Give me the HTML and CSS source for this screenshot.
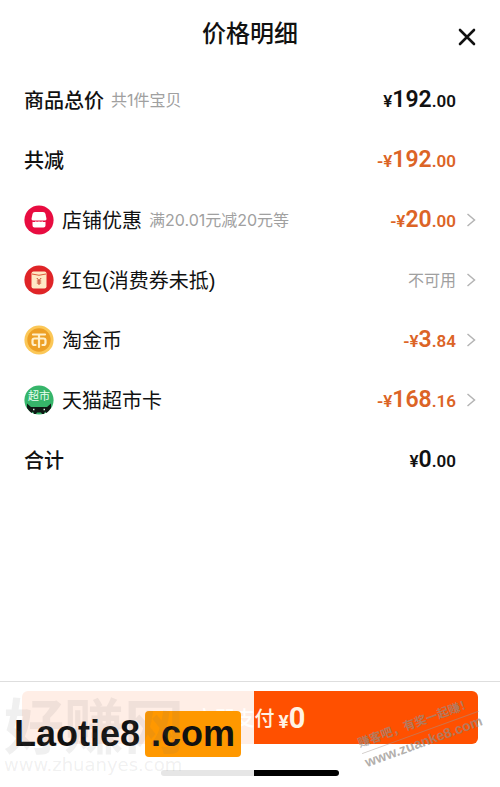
FILE: index.html
```html
<!DOCTYPE html>
<html lang="zh-CN">
<head>
<meta charset="utf-8">
<meta name="viewport" content="width=device-width, initial-scale=1">
<title>价格明细</title>
<link rel="stylesheet" href="styles.css">
</head>
<body>
<main class="sheet">
  <header class="header">
    <h1 class="title">价格明细</h1>
    <button class="close" type="button" aria-label="关闭">
      <svg width="18" height="18" viewBox="0 0 18 18"><path d="M2 2l14 14M16 2L2 16" fill="none" stroke="#111" stroke-width="2.6" stroke-linecap="round"/></svg>
    </button>
  </header>

  <ul class="rows">
    <li class="row">
      <span class="label strong">商品总价</span><span class="note">共1件宝贝</span>
      <span class="price"><small>¥</small>192<small>.00</small></span>
    </li>
    <li class="row">
      <span class="label strong">共减</span>
      <span class="price off"><small>-¥</small>192<small>.00</small></span>
    </li>
    <li>
      <button class="row" type="button">
        <svg class="icon" viewBox="0 0 30 30"><circle cx="15" cy="15" r="14.6" fill="#e80c40"/><path d="M11 7h8q2 0 2.500 2l1 5q0 1.500-2 1.500h-11q-2 0-2-1.500l1-5q.5-2 2.500-2z" fill="#fff"/><path d="M8.500 16.800q1.800.8 3.300-.6 1.500 1.300 3.200 0 1.700 1.300 3.200 0 1.500 1.400 3.300.6v3.700q0 2-2 2h-9q-2 0-2-2z" fill="#fff"/></svg>
        <span class="label">店铺优惠</span><span class="note">满20.01元减20元等</span>
        <span class="price off"><small>-¥</small>20<small>.00</small></span>
        <svg class="chevron" viewBox="0 0 10 16"><path d="M1.500 2l7 6-7 6"/></svg>
      </button>
    </li>
    <li>
      <button class="row" type="button">
        <svg class="icon" viewBox="0 0 30 30"><circle cx="15" cy="15" r="14.600" fill="#df2427"/><rect x="7.500" y="6.500" width="15" height="17" rx="2" fill="#ffe9c5"/><path d="M8 9q7 2.500 14 0" fill="none" stroke="#df5a3c"/><path d="M12.800 13l2.200 2.500 2.200-2.500M15 15.500v4.500M12.800 16h4.400M12.800 18h4.400" fill="none" stroke="#c8462d" stroke-width="1"/></svg>
        <span class="label">红包(消费券未抵)</span>
        <span class="note status">不可用</span>
        <svg class="chevron" viewBox="0 0 10 16"><path d="M1.500 2l7 6-7 6"/></svg>
      </button>
    </li>
    <li>
      <button class="row" type="button">
        <svg class="icon" viewBox="0 0 30 30"><circle cx="15" cy="15" r="14.600" fill="#fbc757"/><circle cx="15" cy="15" r="11.700" fill="#eda025"/><path d="M9 9.500h12M15 9.500v12.500M11.500 20h-1q-2 0-2-2v-2.500q0-2 2-2h9q2 0 2 2V18q0 2-2 2h-1" fill="none" stroke="#fff0cb" stroke-width="2.200" stroke-linecap="round" stroke-linejoin="round"/></svg>
        <span class="label">淘金币</span>
        <span class="price off"><small>-¥</small>3<small>.84</small></span>
        <svg class="chevron" viewBox="0 0 10 16"><path d="M1.500 2l7 6-7 6"/></svg>
      </button>
    </li>
    <li>
      <button class="row" type="button">
        <svg class="icon" viewBox="0 0 30 30"><circle cx="15" cy="15" r="14.600" fill="#36b56a"/><path d="M3 18.500l4 3.500h16l4-3.500v4.500q-2 3-4.500 5l-1.500-1.500-1 2.500h-2l-1-1.500h-4l-1 1.500h-2L9 26.500 7.500 28Q5 26 3 23z" fill="#101915"/><path d="M9 24.500h1.500M19.500 24.500H21" fill="none" stroke="#d7f0df" stroke-width="1.300"/><text class="badge" x="15" y="15" text-anchor="middle">超市</text></svg>
        <span class="label">天猫超市卡</span>
        <span class="price off"><small>-¥</small>168<small>.16</small></span>
        <svg class="chevron" viewBox="0 0 10 16"><path d="M1.500 2l7 6-7 6"/></svg>
      </button>
    </li>
    <li class="row">
      <span class="label strong">合计</span>
      <span class="price"><small>¥</small>0<small>.00</small></span>
    </li>
  </ul>

  <footer class="footer">
    <button class="pay" type="button">立即支付<span class="pay-amount"><small>¥</small>0</span></button>
    <div class="home-bar"></div>
    <div class="veil"></div>
    <div class="brand"><span>Laotie8</span><span class="brand-tag">.com</span></div>
    <div class="mark-left"><span class="mark-name">好赚网</span><span class="mark-url">www.zhuanyes.com</span></div>
    <div class="mark-right"><span class="mark-slogan">赚客吧，有奖一起赚！</span><span class="mark-site">www.zuanke8.com</span></div>
  </footer>
</main>
</body>
</html>
```
FILE: styles.css
```css
* { box-sizing: border-box; }

body {
  margin: 0;
  background: #fff;
  color: #111;
  font-family: "Liberation Sans", "Noto Sans CJK SC", sans-serif;
}

button {
  border: 0;
  padding: 0;
  background: none;
  color: inherit;
  font: inherit;
  text-align: left;
}

svg { display: block; }

.sheet {
  display: flex;
  flex-direction: column;
  min-height: 100vh;
  overflow: hidden;
}

.header {
  display: grid;
  grid-template-columns: 1fr auto 1fr;
  align-items: center;
  height: 70px;
  padding: 0 24px;
}

.title {
  grid-column: 2;
  margin: 0;
  padding-bottom: 2px;
  font-size: 24px;
  line-height: 32px;
  font-weight: 500;
}

.close {
  justify-self: end;
  padding-top: 4px;
}

.rows {
  flex: 1;
  margin: 0;
  padding: 0;
  list-style: none;
}

.row {
  display: flex;
  align-items: center;
  width: 100%;
  height: 60px;
  padding: 0 44px 0 24px;
}

button.row { padding-right: 24px; }

.icon {
  flex: none;
  width: 30px;
  height: 30px;
  margin-right: 8px;
}

.badge {
  fill: #e9fff0;
  font-size: 11px;
}

.label {
  padding-top: 2px;
  font-size: 20px;
  line-height: 28px;
  white-space: nowrap;
}

.strong { font-weight: 500; }

.note {
  margin-left: 7px;
  color: #a0a0a0;
  font-family: Inter, "Noto Sans CJK SC", sans-serif;
  font-size: 16px;
  line-height: 24px;
  white-space: nowrap;
}

.status { margin-left: auto; }

.price {
  margin-left: auto;
  font-family: Roboto, sans-serif;
  font-size: 23px;
  line-height: 28px;
  font-weight: 600;
  white-space: nowrap;
}

.price small { font-size: 17px; }

.off { color: #dc6426; }

.chevron {
  flex: none;
  width: 10px;
  height: 16px;
  margin-left: 10px;
  fill: none;
  stroke: #b4b4b4;
  stroke-width: 1.500;
}

.footer {
  position: relative;
  padding: 9px 22px 11px;
  border-top: 1px solid #dedede;
}

.pay {
  display: flex;
  align-items: center;
  justify-content: center;
  gap: 4px;
  width: 100%;
  height: 53px;
  border-radius: 6px;
  background: #ff5000;
  color: #fff3e4;
  font-size: 20px;
  font-weight: 500;
}

.pay-amount {
  font-family: Roboto, sans-serif;
  font-size: 29px;
  font-weight: 700;
}

.pay-amount small { font-size: 19px; }

.home-bar {
  width: 178px;
  height: 6px;
  margin: 26px auto 0;
  border-radius: 3px;
  background: #000;
}

.veil {
  position: absolute;
  top: 0;
  bottom: 0;
  left: 0;
  width: 254px;
  background: rgba(255, 255, 255, 0.9);
}

.mark-left {
  position: absolute;
  top: 20px;
  left: 4px;
  display: flex;
  flex-direction: column;
  color: rgba(110, 110, 110, 0.1);
}

.mark-name {
  font-size: 60px;
  line-height: 54px;
  font-weight: 700;
}

.mark-url {
  font-family: "DejaVu Sans", sans-serif;
  font-size: 18px;
  line-height: 18px;
}

.mark-right {
  position: absolute;
  top: 30px;
  right: 18px;
  display: flex;
  flex-direction: column;
  color: rgba(145, 140, 135, 0.7);
  transform: rotate(-20deg);
}

.mark-slogan {
  border-bottom: 1px solid rgba(160, 150, 145, 0.5);
  font-size: 12px;
  line-height: 20px;
  font-weight: 700;
}

.mark-site {
  align-self: flex-end;
  font-size: 14px;
  line-height: 18px;
  font-weight: 700;
}

.brand {
  position: absolute;
  top: 29px;
  left: 14px;
  display: flex;
  gap: 5px;
  color: #111;
  font-size: 36px;
  line-height: 46px;
  font-weight: 700;
}

.brand-tag {
  padding: 0 6px;
  border-radius: 4px;
  background: #ff9800;
}
```
